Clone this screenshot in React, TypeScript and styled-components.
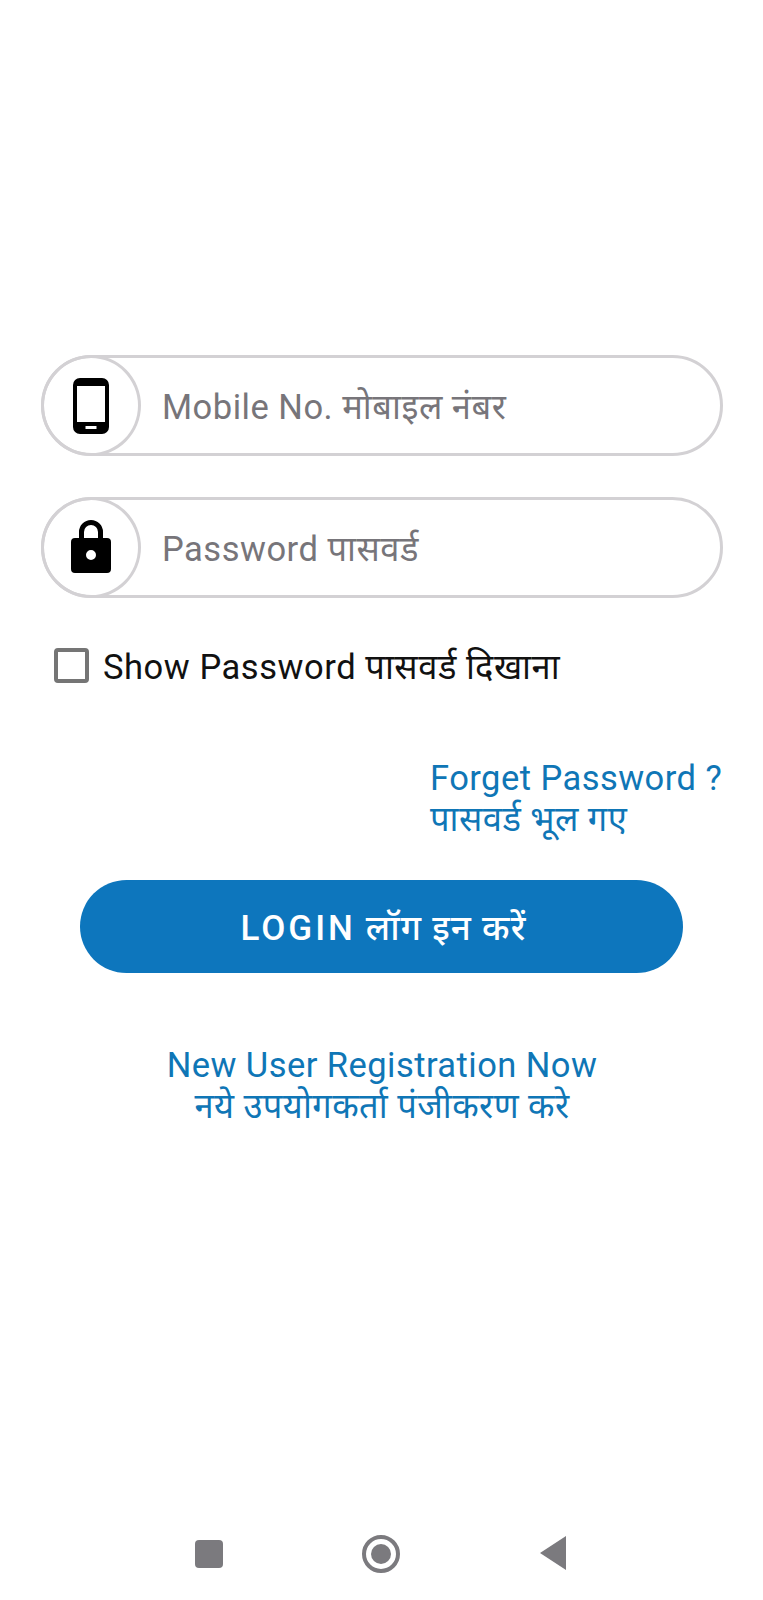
import styled, { createGlobalStyle } from 'styled-components';

const GlobalStyle = createGlobalStyle`
  html, body { margin: 0; padding: 0; background: #fff; }
  body { font-family: Roboto, "Noto Sans", "Noto Sans Devanagari", sans-serif; }
`;

const Screen = styled.div`
  width: 763px;
  height: 1600px;
  display: flex;
  flex-direction: column;
  padding: 355px 40px 0 41px;
  box-sizing: border-box;
  background: #fff;
`;

const Field = styled.div`
  height: 101px;
  border: 3px solid #d3d1d4;
  border-radius: 51px;
  display: flex;
  align-items: center;
  box-sizing: border-box;
  margin-bottom: 41px;
`;

const IconCircle = styled.div`
  width: 100px;
  height: 101px;
  margin-left: -3px;
  border: 3px solid #d3d1d4;
  border-radius: 50%;
  box-sizing: border-box;
  display: flex;
  align-items: center;
  justify-content: center;
  flex-shrink: 0;
`;

const Hint = styled.span`
  margin-left: 21px;
  font-size: 34.5px;
  letter-spacing: 0.5px;
  color: #77757a;
`;

const CheckRow = styled.div`
  display: flex;
  align-items: center;
  margin: 1px 0 0 13px;
  height: 50px;
`;

const Box = styled.div`
  width: 35px;
  height: 35px;
  border: 4px solid #757575;
  border-radius: 4px;
  box-sizing: border-box;
`;

const CheckLabel = styled.span`
  margin-left: 14px;
  font-size: 34.5px;
  letter-spacing: 0.55px;
  color: #111;
`;

const Forgot = styled.div`
  align-self: flex-end;
  margin-top: 68px;
  width: 293px;
  font-size: 34.5px;
  line-height: 41px;
  letter-spacing: 0.45px;
  color: #0f76b6;
`;

const LoginButton = styled.button`
  align-self: center;
  margin: 40px 0 0 -1px;
  padding: 0 0 0 4px;
  width: 603px;
  height: 93px;
  border: none;
  border-radius: 47px;
  background: #0d76bd;
  color: #fff;
  font-family: inherit;
  font-size: 35px;
  font-weight: 500;
  letter-spacing: 1.2px;
`;

const LoginLatin = styled.span`
  letter-spacing: 3px;
`;

const Register = styled.div`
  margin-top: 72px;
  text-align: center;
  font-size: 34.5px;
  line-height: 41px;
  letter-spacing: 0.45px;
  color: #0f76b6;
`;

const NavBar = styled.div`
  margin-top: auto;
  height: 65px;
  display: flex;
  align-items: flex-start;
`;

const NavSquare = styled.div`
  width: 28px;
  height: 28px;
  margin: 5px 0 0 154px;
  border-radius: 4px;
  background: #7b7a7e;
`;

const NavHome = styled.div`
  width: 38px;
  height: 38px;
  margin-left: 139px;
  border: 4px solid #7b7a7e;
  border-radius: 50%;
  box-sizing: border-box;
  display: flex;
  align-items: center;
  justify-content: center;
  &::after {
    content: '';
    width: 20px;
    height: 20px;
    border-radius: 50%;
    background: #7b7a7e;
  }
`;

const NavBack = styled.svg`
  margin: 0 0 0 139px;
`;

const LockSvg = styled.svg`
  margin-bottom: 3px;
`;

function PhoneIcon() {
  return (
    <svg width="36" height="56" viewBox="0 0 36 56">
      <path
        fillRule="evenodd"
        fill="#000"
        d="M7 0h22a7 7 0 0 1 7 7v42a7 7 0 0 1-7 7H7a7 7 0 0 1-7-7V7a7 7 0 0 1 7-7zM4 8v36h28V8zm8.500 40v3h11v-3z"
      />
    </svg>
  );
}

function LockIcon() {
  return (
    <LockSvg width="40" height="53" viewBox="0 0 40 53">
      <path
        fillRule="evenodd"
        fill="#000"
        d="M8 18V12a12 12 0 0 1 24 0v6h4a4 4 0 0 1 4 4v27a4 4 0 0 1-4 4H4a4 4 0 0 1-4-4V22a4 4 0 0 1 4-4zm5 0h14V12a7 7 0 0 0-14 0zm7 12a5 5 0 1 0 0 10 5 5 0 0 0 0-10z"
      />
    </LockSvg>
  );
}

export default function App() {
  return (
    <>
      <GlobalStyle />
      <Screen>
        <Field>
          <IconCircle><PhoneIcon /></IconCircle>
          <Hint>Mobile No. मोबाइल नंबर</Hint>
        </Field>
        <Field>
          <IconCircle><LockIcon /></IconCircle>
          <Hint>Password पासवर्ड</Hint>
        </Field>
        <CheckRow>
          <Box />
          <CheckLabel>Show Password पासवर्ड दिखाना</CheckLabel>
        </CheckRow>
        <Forgot>
          Forget Password ?
          <br />
          पासवर्ड भूल गए
        </Forgot>
        <LoginButton><LoginLatin>LOGIN</LoginLatin> लॉग इन करें</LoginButton>
        <Register>
          New User Registration Now
          <br />
          नये उपयोगकर्ता पंजीकरण करे
        </Register>
        <NavBar>
          <NavSquare />
          <NavHome />
          <NavBack width="28" height="36" viewBox="0 0 28 36">
            <path fill="#7b7a7e" d="M27 1v34L1 18z" />
          </NavBack>
        </NavBar>
      </Screen>
    </>
  );
}
